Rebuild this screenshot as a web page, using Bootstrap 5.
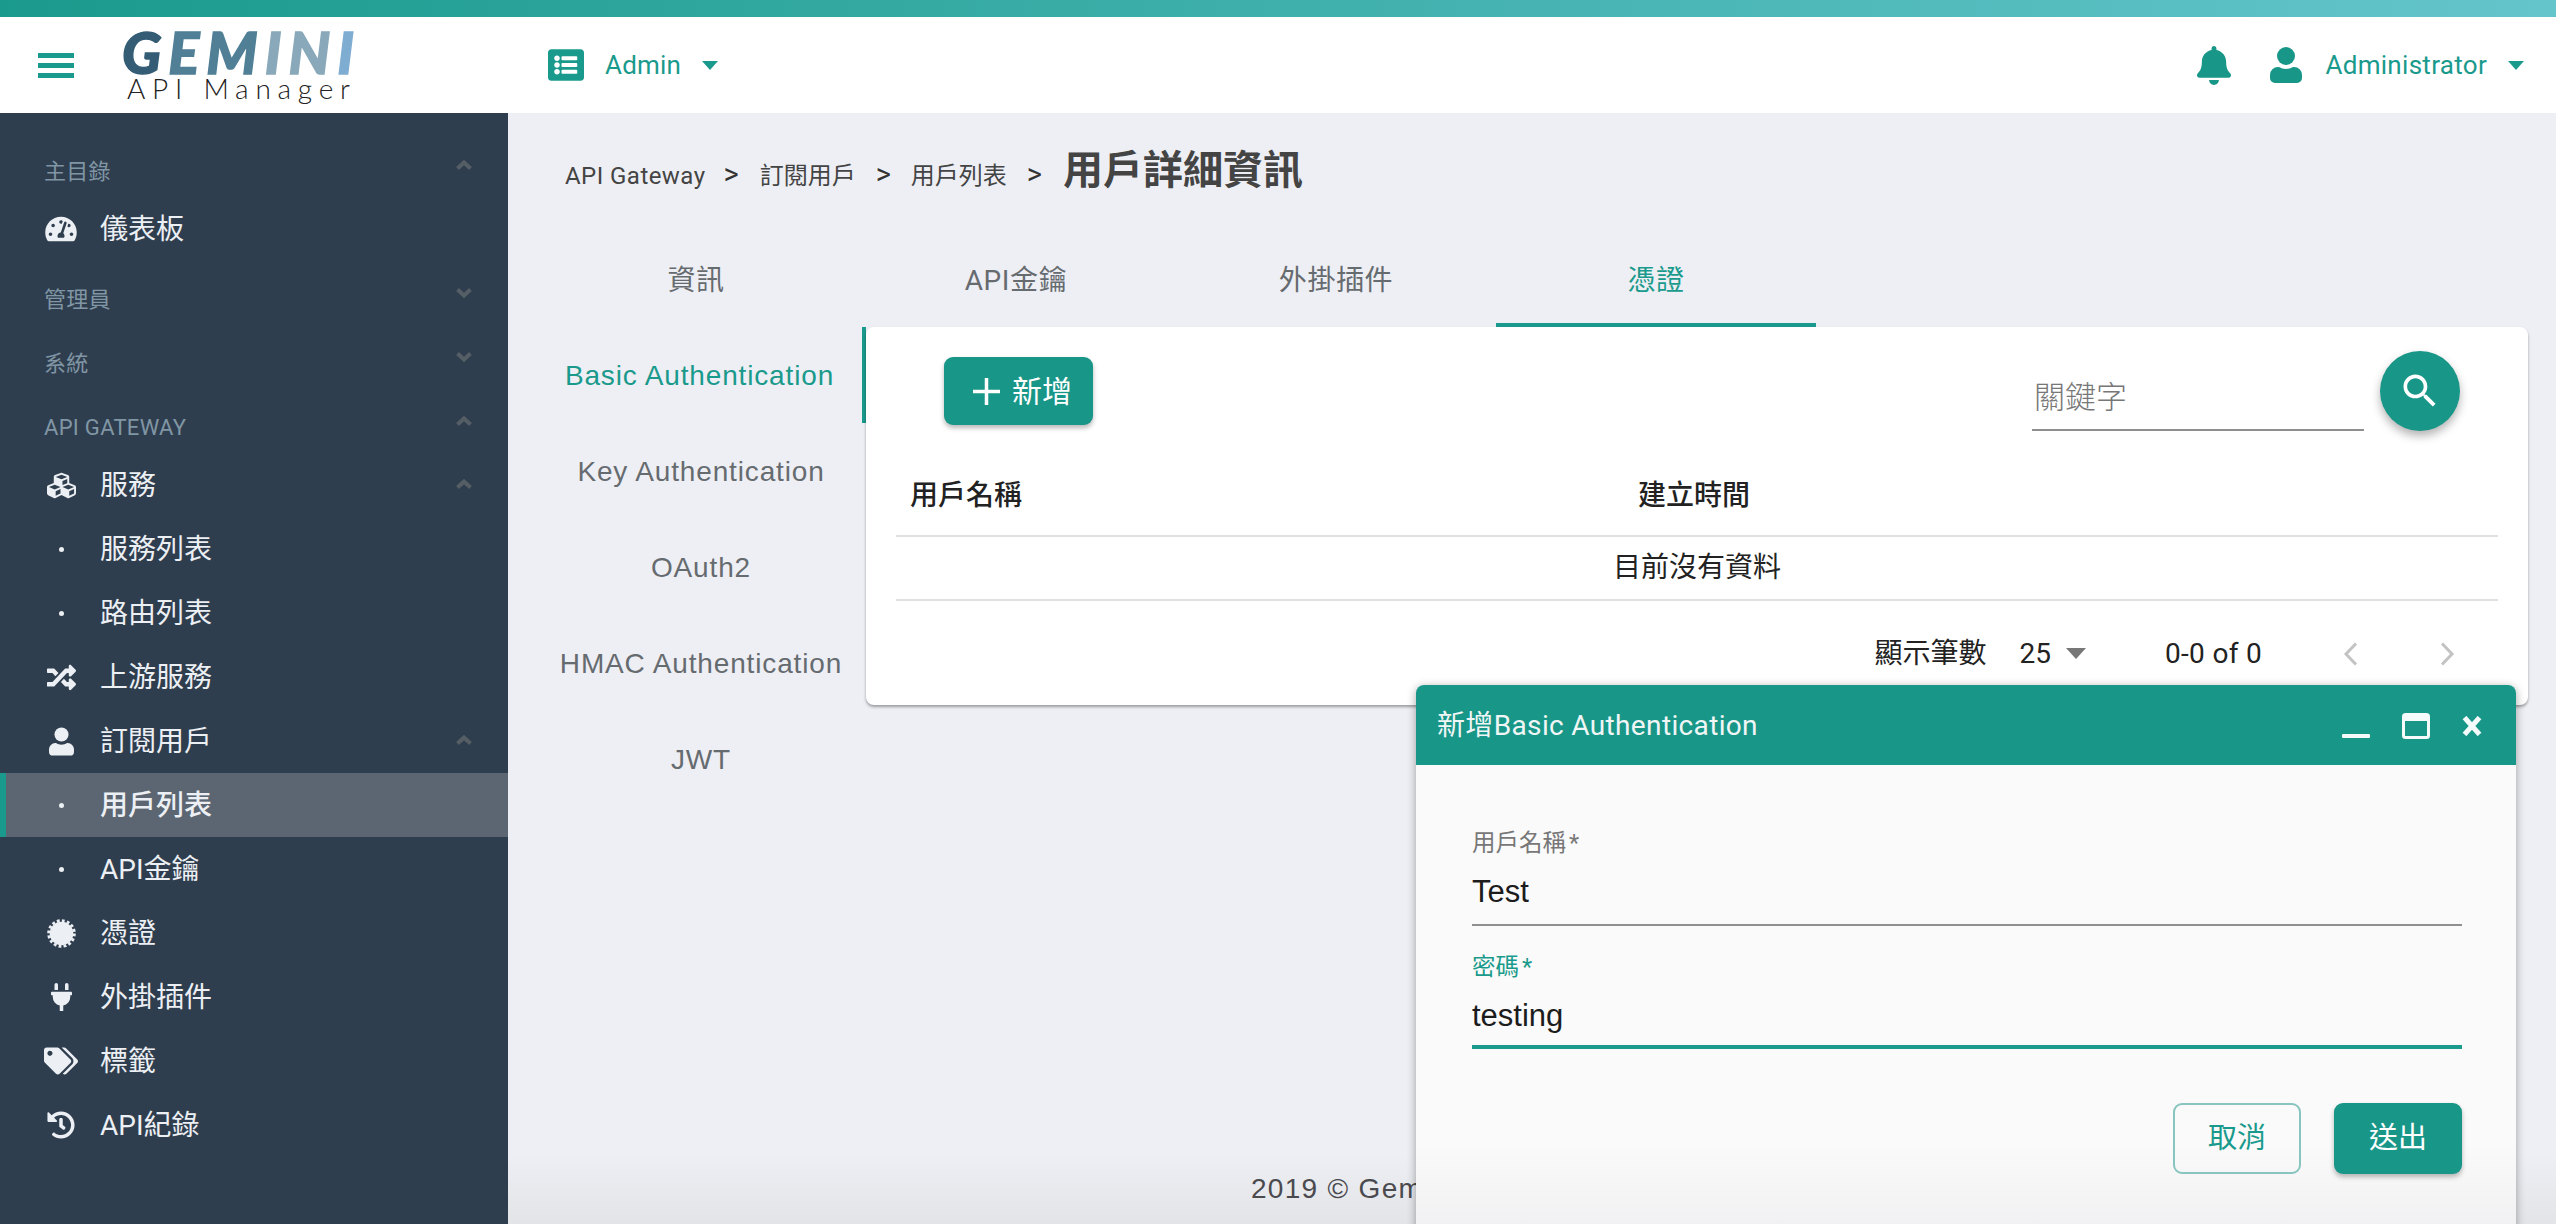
<!DOCTYPE html>
<html lang="zh-Hant">
<head>
  <meta charset="UTF-8" />
  <meta name="viewport" content="width=device-width, initial-scale=1.0"/>
  <title>用戶詳細資訊</title>
  <link href="https://cdn.jsdelivr.net/npm/bootstrap@5.3.3/dist/css/bootstrap.min.css" rel="stylesheet">
  <style>
    html, body { height: 100%; }
    body {
      font-family: Roboto, "Noto Sans CJK TC", sans-serif;
      background: #eeeff4;
      color: #222;
      overflow: hidden;
      position: relative;
    }
    .top-strip { height: 17px; background: linear-gradient(to right, #1a9a8c, #64c5cb); flex: none; }
    .app-header { height: 96px; background: #fff; padding: 0 32px 0 38px; flex: none; flex-wrap: nowrap; justify-content: flex-start; }
    .burger { width: 36px; display: flex; flex-direction: column; gap: 5px; margin-right: 48px; }
    .burger span { height: 5px; background: #1a9a8c; display: block; }
    .logo-box { width: 232px; margin-right: 194px; height: 96px; flex: none; display: block; overflow: visible; }
    .logo-main { font-family: Lato, sans-serif; font-weight: 900; font-style: italic; font-size: 58px; stroke-width: 1.4px; }
    .logo-sub { font-family: Lato, sans-serif; font-weight: 300; font-size: 28px; fill: #222; }
    .teal-link { color: #1a9a8c; font-size: 26px; text-decoration: none; font-family: Roboto, sans-serif; letter-spacing: .2px; }
    .down-caret { width: 0; height: 0; border-left: 8px solid transparent; border-right: 8px solid transparent; border-top: 9px solid #1a9a8c; display: inline-block; margin-left: 21px; }
    .gap-admin { margin-left: 21px; }
    .gap-user { margin-left: 39px; }
    .gap-name { margin-left: 23px; letter-spacing: .3px; }

    .side-menu { width: 508px; background: #2f3e4e; flex: none; padding-top: 20px; }
    .menu-head { height: 64px; padding: 12px 36px 0 44px; color: #8096a5; font-size: 22px; letter-spacing: .3px; display: flex; align-items: center; }
    .menu-row { height: 64px; padding: 2px 36px 0 44px; color: #eceff3; font-size: 28px; display: flex; align-items: center; }
    .menu-row.on { background: #5b6672; border-left: 6px solid #1a9a8c; padding-left: 38px; font-weight: 500; }
    .menu-ico { width: 34px; display: flex; justify-content: center; margin-right: 22px; flex: none; margin-top: -2px; }
    .menu-dot { width: 5px; height: 5px; border-radius: 50%; background: #eceff3; }
    .fold { margin-left: auto; }
    .fold-up { margin-top: -4px; }
    .menu-head .fold { margin-top: -12px; }

    .crumbs { height: 118px; padding: 38px 0 0 57px; display: flex; align-items: baseline; font-size: 24px; color: #444; flex: none; }
    .crumbs .latin { letter-spacing: .45px; }
    .crumbs .sep { margin: 0 21px 0 18px; font-size: 29px; color: #333; line-height: 1; }
    .crumbs .sep + span + .sep { margin: 0 20px 0 20px; }
    .crumbs .here { font-size: 40px; font-weight: 700; color: #444; line-height: 1; margin-left: 1px; }
    .top-tabs { margin-left: 28px; height: 96px; flex: none; }
    .top-tabs .nav-link { width: 320px; height: 96px; padding: 3px 0 0; display: flex; align-items: center; justify-content: center; font-size: 28px; letter-spacing: .6px; color: #666b70; border-radius: 0; }
    .top-tabs .nav-link.active { color: #1a9a8c; border-bottom: 4px solid #1a9a8c; padding-top: 7px; }
    .side-tabs { width: 329px; margin-left: 29px; flex: none; }
    .side-tabs .nav-link { height: 96px; padding: 2px 1px 0 0; display: flex; align-items: center; justify-content: center; font-family: "Liberation Sans", sans-serif; font-size: 28px; letter-spacing: .85px; color: #666b70; border-radius: 0; white-space: nowrap; }
    .side-tabs .nav-link.active { color: #1a9a8c; border-right: 4px solid #1a9a8c; padding-right: 0; }
    .data-card { width: 1662px; height: 378px; border: 0; border-radius: 8px; box-shadow: 0 2px 3px rgba(0,0,0,.35); }
    .card-tools { padding: 24px 68px 0 78px; margin-bottom: 23px; display: flex; height: 104px; }
    .btn-teal { background: #189688; color: #fff; border: 0; border-radius: 9px; box-shadow: 0 3px 5px rgba(0,0,0,.28); font-size: 30px; }
    .btn-teal:hover { background: #189688; color: #fff; }
    .add-btn { width: 149px; height: 68px; margin-top: 6px; padding: 0 0 0 29px; display: flex; align-items: center; justify-content: flex-start; gap: 12px; }
    .key-input { width: 332px; height: 80px; margin-left: auto; margin-right: 16px; border: 0; border-bottom: 2px solid #8f8f8f; border-radius: 0; background: transparent; padding: 14px 2px 0; font-size: 31px; box-shadow: none; }
    .key-input::placeholder { color: #777; font-weight: 300; }
    .fab { width: 80px; height: 80px; border-radius: 50%; background: #189688; display: flex; align-items: center; justify-content: center; border: 0; padding: 0; box-shadow: 0 5px 10px rgba(0,0,0,.3); flex: none; }
    .plain-table { width: 1602px; margin: 0 30px; table-layout: fixed; }
    .plain-table th, .plain-table td { border-bottom: 2px solid #e0e0e0; font-size: 28px; padding: 0 14px; vertical-align: middle; color: #222; }
    .plain-table th { height: 82px; font-weight: 500; padding-top: 2px; }
    .plain-table td { height: 64px; }
    .pager { height: 105px; display: flex; align-items: center; padding: 1px 73px 0 0; justify-content: flex-end; font-size: 28px; color: #222; }
    .size-caret { width: 0; height: 0; border-left: 10px solid transparent; border-right: 10px solid transparent; border-top: 11px solid #777; margin: 0 79px 0 15px; }
    .pager-count { letter-spacing: .3px; }
    .page-foot { margin-top: auto; height: 70px; flex: none; display: flex; align-items: center; padding-left: 743px; font-family: "Liberation Sans", "Noto Sans CJK TC", sans-serif; font-size: 28px; letter-spacing: 1.3px; color: #4a4a4f; background: linear-gradient(transparent, #e3e4e7); }

    .float-dialog { position: absolute; left: 1416px; top: 685px; width: 1100px; height: 560px; background: linear-gradient(#fafafa 82%, #efeff1); border-radius: 8px 8px 0 0; box-shadow: 0 2px 10px rgba(0,0,0,.35); }
    .dialog-bar { height: 80px; background: #189688; border-radius: 8px 8px 0 0; color: #f0f6f5; font-size: 28px; letter-spacing: .35px; padding: 2px 34px 0 21px; display: flex; align-items: center; }
    .dialog-form { padding: 63px 54px 0 56px; }
    .field-label { font-size: 23.500px; line-height: 30px; color: #777; margin: 0; display: block; }
    .field-label.hot { color: #1a9a8c; margin-top: 26px; }
    .req-mark { margin-left: 3px; }
    .field-input { height: 68px; border: 0; border-bottom: 2px solid #8f8f8f; border-radius: 0; background: transparent; padding: 2px 0 0; font-family: "Liberation Sans", sans-serif; font-size: 31px; color: #1c1c1c; box-shadow: none; }
    .field-input.hot { border-bottom: 4px solid #1a9a8c; height: 67px; padding-top: 5px; }
    .dialog-btns { display: flex; justify-content: flex-end; gap: 33px; margin-top: 54px; }
    .dialog-btns .btn { width: 128px; height: 71px; padding: 0; font-size: 29px; border-radius: 9px; }
    .btn-ghost { color: #1a9a8c; background: transparent; border: 2px solid #88c5bf; }
  </style>
</head>
<body class="d-flex flex-column">

  <div class="top-strip"></div>

  <nav class="navbar app-header">
    <div class="burger"><span></span><span></span><span></span></div>
    <svg class="logo-box" viewBox="0 0 232 96">
      <text class="logo-main" x="0" y="57" textLength="232" lengthAdjust="spacing"><tspan fill="#345d75" stroke="#345d75">G</tspan><tspan fill="#507f96" stroke="#507f96">EM</tspan><tspan fill="#89a9ba" stroke="#89a9ba">IN</tspan><tspan fill="#7fadd2" stroke="#7fadd2">I</tspan></text>
      <text class="logo-sub" x="5" y="82" textLength="223" lengthAdjust="spacing">API Manager</text>
    </svg>
    <a class="teal-link d-flex align-items-center" href="#">
      <svg width="36" height="36" viewBox="0 0 512 512" fill="#1a9a8c"><path d="M464 480H48c-26.51 0-48-21.49-48-48V80c0-26.51 21.49-48 48-48h416c26.51 0 48 21.49 48 48v352c0 26.51-21.49 48-48 48zM128 120c-22.091 0-40 17.909-40 40s17.909 40 40 40 40-17.909 40-40-17.909-40-40-40zm0 96c-22.091 0-40 17.909-40 40s17.909 40 40 40 40-17.909 40-40-17.909-40-40-40zm0 96c-22.091 0-40 17.909-40 40s17.909 40 40 40 40-17.909 40-40-17.909-40-40-40zm288-136v-32c0-6.627-5.373-12-12-12H204c-6.627 0-12 5.373-12 12v32c0 6.627 5.373 12 12 12h200c6.627 0 12-5.373 12-12zm0 96v-32c0-6.627-5.373-12-12-12H204c-6.627 0-12 5.373-12 12v32c0 6.627 5.373 12 12 12h200c6.627 0 12-5.373 12-12zm0 96v-32c0-6.627-5.373-12-12-12H204c-6.627 0-12 5.373-12 12v32c0 6.627 5.373 12 12 12h200c6.627 0 12-5.373 12-12z"/></svg>
      <span class="gap-admin">Admin</span>
      <span class="down-caret"></span>
    </a>
    <div class="ms-auto d-flex align-items-center">
      <svg width="34" height="39" viewBox="0 0 448 512" fill="#189688"><path d="M224 512c35.32 0 63.97-28.65 63.97-64H160.03c0 35.35 28.65 64 63.97 64zm215.39-149.71c-19.32-20.76-55.47-51.99-55.47-154.29 0-77.7-54.48-139.9-127.94-155.16V32c0-17.67-14.32-32-31.98-32s-31.98 14.33-31.98 32v20.84C118.56 68.1 64.08 130.3 64.08 208c0 102.3-36.15 133.53-55.47 154.29-6 6.45-8.66 14.16-8.61 21.71.11 16.4 12.98 32 32.1 32h383.8c19.12 0 32-15.6 32.1-32 .05-7.55-2.61-15.27-8.61-21.71z"/></svg>
      <svg class="gap-user" width="32" height="36" viewBox="0 0 32 36" fill="#189688"><circle cx="16" cy="9" r="9"/><path d="M0 31v-3a8 8 0 0 1 8-8h1c2 1.300 4.500 2 7 2s5-.7 7-2h1a8 8 0 0 1 8 8v3a5 5 0 0 1-5 5H5a5 5 0 0 1-5-5z"/></svg>
      <span class="teal-link gap-name">Administrator</span>
      <span class="down-caret"></span>
    </div>
  </nav>

  <div class="d-flex flex-grow-1" style="min-height:0">
    <aside class="side-menu">
      <div class="menu-head">主目錄
        <svg class="fold" width="16" height="10" viewBox="0 0 16 10" fill="none" stroke="#555d65" stroke-width="4"><path d="M1.500 8.500 8 2.500l6.500 6"/></svg>
      </div>
      <div class="menu-row">
        <span class="menu-ico"><svg width="32" height="28" viewBox="0 0 576 512" fill="#eceff3"><path d="M288 32C128.94 32 0 160.94 0 320c0 52.800 14.250 102.260 39.060 144.800 5.610 9.620 16.300 15.200 27.440 15.200h443c11.140 0 21.830-5.580 27.440-15.200C561.750 422.260 576 372.800 576 320c0-159.060-128.940-288-288-288zm0 64c14.710 0 26.580 10.130 30.320 23.650-1.110 2.260-2.640 4.230-3.450 6.670l-9.220 27.670c-5.130 3.490-10.970 6.010-17.640 6.010-17.670 0-32-14.330-32-32S270.330 96 288 96zM96 384c-17.670 0-32-14.330-32-32s14.330-32 32-32 32 14.330 32 32-14.330 32-32 32zm48-160c-17.670 0-32-14.330-32-32s14.330-32 32-32 32 14.330 32 32-14.330 32-32 32zm246.770-72.410l-61.330 184C343.130 347.330 352 364.540 352 384c0 11.720-3.380 22.550-8.880 32H232.880c-5.500-9.450-8.880-20.280-8.880-32 0-33.940 26.500-61.430 59.900-63.590l61.340-184.010c4.170-12.560 17.730-19.450 30.360-15.170 12.570 4.190 19.350 17.790 15.170 30.360zm14.660 57.200l15.520-46.550c3.470-1.290 7.130-2.230 11.050-2.230 17.670 0 32 14.330 32 32s-14.330 32-32 32c-11.380-.01-20.890-6.280-26.570-15.220zM480 384c-17.670 0-32-14.330-32-32s14.330-32 32-32 32 14.330 32 32-14.330 32-32 32z"/></svg></span>
        儀表板
      </div>
      <div class="menu-head">管理員
        <svg class="fold" width="16" height="10" viewBox="0 0 16 10" fill="none" stroke="#555d65" stroke-width="4"><path d="M1.500 1.500 8 7.500l6.500-6"/></svg>
      </div>
      <div class="menu-head">系統
        <svg class="fold" width="16" height="10" viewBox="0 0 16 10" fill="none" stroke="#555d65" stroke-width="4"><path d="M1.500 1.500 8 7.500l6.500-6"/></svg>
      </div>
      <div class="menu-head">API GATEWAY
        <svg class="fold" width="16" height="10" viewBox="0 0 16 10" fill="none" stroke="#555d65" stroke-width="4"><path d="M1.500 8.500 8 2.500l6.500 6"/></svg>
      </div>
      <div class="menu-row">
        <span class="menu-ico"><svg width="29" height="29" viewBox="0 0 512 512" fill="#eceff3"><path d="M488.600 250.200L392 214V105.500c0-15-9.300-28.400-23.400-33.700l-100-37.500c-8.100-3.100-17.100-3.100-25.300 0l-100 37.500c-14.100 5.300-23.400 18.700-23.400 33.700V214l-96.600 36.200C9.300 255.500 0 268.900 0 283.900V394c0 13.600 7.700 26.100 19.900 32.200l100 50c10.100 5.100 22.100 5.100 32.200 0l103.900-52 103.900 52c10.100 5.100 22.100 5.100 32.200 0l100-50c12.200-6.100 19.900-18.600 19.900-32.200V283.900c0-15-9.300-28.400-23.400-33.700zM358 214.800l-85 31.900v-68.200l85-37v73.300zM154 104.100l102-38.200 102 38.200v.6l-102 41.400-102-41.400v-.6zm84 291.100l-85 42.500v-79.100l85-38.800v75.400zm0-112l-102 41.400-102-41.400v-.6l102-38.200 102 38.200v.6zm240 112l-85 42.500v-79.100l85-38.800v75.400zm0-112l-102 41.400-102-41.400v-.6l102-38.200 102 38.200v.6z"/></svg></span>
        服務
        <svg class="fold fold-up" width="16" height="10" viewBox="0 0 16 10" fill="none" stroke="#555d65" stroke-width="4"><path d="M1.500 8.500 8 2.500l6.500 6"/></svg>
      </div>
      <div class="menu-row"><span class="menu-ico"><span class="menu-dot"></span></span>服務列表</div>
      <div class="menu-row"><span class="menu-ico"><span class="menu-dot"></span></span>路由列表</div>
      <div class="menu-row">
        <span class="menu-ico"><svg width="29" height="29" viewBox="0 0 512 512" fill="#eceff3"><path d="M504.971 359.029c9.373 9.373 9.373 24.569 0 33.941l-80 79.984c-15.010 15.010-40.971 4.490-40.971-16.971V416h-58.785a12.004 12.004 0 0 1-8.773-3.812l-70.556-75.596 53.333-57.143L352 336h32v-39.981c0-21.438 25.943-31.998 40.971-16.971l80 79.981zM12 176h84l52.781 56.551 53.333-57.143-70.556-75.596A11.999 11.999 0 0 0 122.785 96H12c-6.627 0-12 5.373-12 12v56c0 6.627 5.373 12 12 12zm372 0v39.984c0 21.460 25.961 31.980 40.971 16.971l80-79.984c9.373-9.373 9.373-24.569 0-33.941l-80-79.981C409.943 24.021 384 34.582 384 56.019V96h-58.785a12.004 12.004 0 0 0-8.773 3.812L96 336H12c-6.627 0-12 5.373-12 12v56c0 6.627 5.373 12 12 12h110.785c3.326 0 6.503-1.381 8.773-3.812L352 176h32z"/></svg></span>
        上游服務
      </div>
      <div class="menu-row">
        <span class="menu-ico"><svg width="25" height="29" viewBox="0 0 32 36" fill="#eceff3"><circle cx="16" cy="9" r="9"/><path d="M0 31v-3a8 8 0 0 1 8-8h1c2 1.300 4.500 2 7 2s5-.7 7-2h1a8 8 0 0 1 8 8v3a5 5 0 0 1-5 5H5a5 5 0 0 1-5-5z"/></svg></span>
        訂閱用戶
        <svg class="fold fold-up" width="16" height="10" viewBox="0 0 16 10" fill="none" stroke="#555d65" stroke-width="4"><path d="M1.500 8.500 8 2.500l6.500 6"/></svg>
      </div>
      <div class="menu-row on"><span class="menu-ico"><span class="menu-dot"></span></span>用戶列表</div>
      <div class="menu-row"><span class="menu-ico"><span class="menu-dot"></span></span>API金鑰</div>
      <div class="menu-row">
        <span class="menu-ico"><svg width="29" height="29" viewBox="0 0 29 29"><circle cx="14.500" cy="14.500" r="11.800" fill="#eceff3"/><circle cx="14.500" cy="14.500" r="12.800" fill="none" stroke="#eceff3" stroke-width="3" stroke-dasharray="2.800 2.227"/></svg></span>
        憑證
      </div>
      <div class="menu-row">
        <span class="menu-ico"><svg width="21" height="28" viewBox="0 0 384 512" fill="#eceff3"><path d="M320 32a32 32 0 0 0-64 0v96h64zm48 128H16a16 16 0 0 0-16 16v32a16 16 0 0 0 16 16h16v32a160.070 160.070 0 0 0 128 156.800V512h64v-99.200A160.070 160.070 0 0 0 352 256v-32h16a16 16 0 0 0 16-16v-32a16 16 0 0 0-16-16zM128 32a32 32 0 0 0-64 0v96h64z"/></svg></span>
        外掛插件
      </div>
      <div class="menu-row">
        <span class="menu-ico"><svg width="35" height="28" viewBox="0 0 640 512" fill="#eceff3"><path d="M497.941 225.941L286.059 14.059A48 48 0 0 0 252.118 0H48C21.490 0 0 21.490 0 48v204.118a48 48 0 0 0 14.059 33.941l211.882 211.882c18.744 18.745 49.136 18.746 67.882 0l204.118-204.118c18.745-18.745 18.745-49.137 0-67.882zM112 160c-26.510 0-48-21.490-48-48s21.490-48 48-48 48 21.490 48 48-21.490 48-48 48zm513.941 133.823L421.823 497.941c-18.745 18.745-49.137 18.745-67.882 0l-.36-.36L527.640 323.522c16.999-16.999 26.360-39.600 26.360-63.640s-9.362-46.641-26.360-63.640L331.397 0h48.721a48 48 0 0 1 33.941 14.059l211.882 211.882c18.745 18.745 18.745 49.137 0 67.882z"/></svg></span>
        標籤
      </div>
      <div class="menu-row">
        <span class="menu-ico"><svg width="28" height="28" viewBox="0 0 512 512" fill="#eceff3"><path d="M504 255.531c.253 136.640-111.180 248.372-247.820 248.468-59.015.042-113.223-20.530-155.822-54.911-11.077-8.940-11.905-25.541-1.839-35.607l11.267-11.267c8.609-8.609 22.353-9.551 31.891-1.984C173.062 425.135 212.781 440 256 440c101.705 0 184-82.311 184-184 0-101.705-82.311-184-184-184-48.814 0-93.149 18.969-126.068 49.932l50.754 50.754c10.080 10.080 2.941 27.314-11.313 27.314H24c-8.837 0-16-7.163-16-16V38.627c0-14.254 17.234-21.393 27.314-11.314l49.372 49.372C129.209 34.136 189.552 8 256 8c136.810 0 247.747 110.780 248 247.531zm-180.912 78.784l9.823-12.630c8.138-10.463 6.253-25.542-4.210-33.679L288 256.349V152c0-13.255-10.745-24-24-24h-16c-13.255 0-24 10.745-24 24v135.651l65.409 50.874c10.463 8.137 25.541 6.253 33.679-4.210z"/></svg></span>
        API紀錄
      </div>
    </aside>

    <main class="flex-grow-1 d-flex flex-column">
      <div class="crumbs">
        <span class="latin">API Gateway</span><span class="sep">&gt;</span>
        <span>訂閱用戶</span><span class="sep">&gt;</span>
        <span>用戶列表</span><span class="sep">&gt;</span>
        <span class="here">用戶詳細資訊</span>
      </div>

      <ul class="nav top-tabs">
        <li class="nav-item"><a class="nav-link" href="#">資訊</a></li>
        <li class="nav-item"><a class="nav-link" href="#">API金鑰</a></li>
        <li class="nav-item"><a class="nav-link" href="#">外掛插件</a></li>
        <li class="nav-item"><a class="nav-link active" href="#">憑證</a></li>
      </ul>

      <div class="d-flex">
        <div class="nav flex-column side-tabs">
          <a class="nav-link active" href="#">Basic Authentication</a>
          <a class="nav-link" href="#">Key Authentication</a>
          <a class="nav-link" href="#">OAuth2</a>
          <a class="nav-link" href="#">HMAC Authentication</a>
          <a class="nav-link" href="#">JWT</a>
        </div>
        <div class="card data-card">
          <div class="card-tools">
            <button class="btn btn-teal add-btn">
              <svg width="27" height="27" viewBox="0 0 27 27" fill="none" stroke="#fff" stroke-width="3.500"><path d="M13.500 0v27M0 13.500h27"/></svg>
              新增
            </button>
            <input class="form-control key-input" type="text" placeholder="關鍵字">
            <button class="fab">
              <svg width="44" height="44" viewBox="0 0 24 24" fill="#fff"><path d="M15.500 14h-.79l-.28-.27C15.410 12.590 16 11.110 16 9.500 16 5.910 13.090 3 9.500 3S3 5.910 3 9.500 5.910 16 9.500 16c1.610 0 3.090-.59 4.230-1.570l.27.28v.79l5 4.990L20.490 19l-4.990-5zm-6 0C7.010 14 5 11.990 5 9.500S7.010 5 9.500 5 14 7.010 14 9.500 11.990 14 9.500 14z"/></svg>
            </button>
          </div>
          <table class="plain-table">
            <colgroup><col style="width:728px"><col></colgroup>
            <thead><tr><th>用戶名稱</th><th>建立時間</th></tr></thead>
            <tbody><tr><td colspan="2" class="text-center">目前沒有資料</td></tr></tbody>
          </table>
          <div class="pager">
            <span>顯示筆數</span>
            <span style="margin-left:33px">25</span>
            <span class="size-caret"></span>
            <span class="pager-count">0-0 of 0</span>
            <svg style="margin-left:81px" width="15" height="24" viewBox="0 0 15 24" fill="none" stroke="#c3c3c3" stroke-width="3"><path d="M13 1.500 3 12l10 10.500"/></svg>
            <svg style="margin-left:82px" width="15" height="24" viewBox="0 0 15 24" fill="none" stroke="#c3c3c3" stroke-width="3"><path d="M2 1.500 12 12 2 22.500"/></svg>
          </div>
        </div>
      </div>

      <footer class="page-foot">2019 © Gemini API Manager</footer>
    </main>
  </div>

  <div class="float-dialog">
    <div class="dialog-bar">
      <span>新增Basic Authentication</span>
      <svg class="ms-auto" width="28" height="26" viewBox="0 0 28 26" fill="#f4fbfa"><rect y="21" width="28" height="4" rx="1"/></svg>
      <svg style="margin-left:32px" width="28" height="26" viewBox="0 0 28 26"><rect x="1.500" y="1.500" width="25" height="23" rx="2" fill="none" stroke="#f4fbfa" stroke-width="3"/><rect x="1" y="1" width="26" height="7" rx="2" fill="#f4fbfa"/></svg>
      <svg style="margin-left:32px" width="20" height="20" viewBox="0 0 20 20" fill="none" stroke="#f4fbfa" stroke-width="5"><path d="M2.500 1.500 17.500 18.500M17.500 1.500 2.500 18.500"/></svg>
    </div>
    <form class="dialog-form">
      <label class="field-label">用戶名稱<span class="req-mark">*</span></label>
      <input class="form-control field-input" type="text" value="Test">
      <label class="field-label hot">密碼<span class="req-mark">*</span></label>
      <input class="form-control field-input hot" type="text" value="testing">
      <div class="dialog-btns">
        <button type="button" class="btn btn-ghost">取消</button>
        <button type="button" class="btn btn-teal">送出</button>
      </div>
    </form>
  </div>

  <script src="https://cdn.jsdelivr.net/npm/bootstrap@5.3.3/dist/js/bootstrap.bundle.min.js"></script>
</body>
</html>
